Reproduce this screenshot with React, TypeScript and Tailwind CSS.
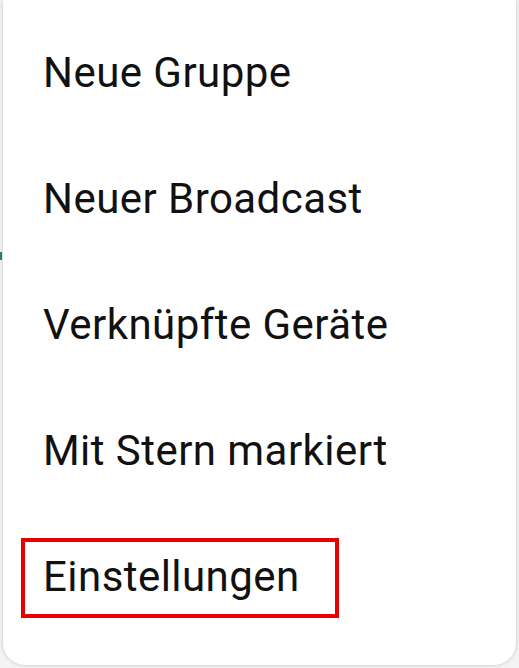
import React from 'react';

const items = ['Neue Gruppe', 'Neuer Broadcast', 'Verknüpfte Geräte', 'Mit Stern markiert', 'Einstellungen'];

const App: React.FC = () => {
  return (
    <div className="relative w-[519px] h-[668px] overflow-hidden bg-[#f4f4f4]">
      {/* underlying tab indicator peeking out */}
      <div className="absolute left-0 top-[252px] w-[2px] h-[8px] bg-[#1f8a6e]" />

      {/* menu panel */}
      <div
        className="relative mx-[3px] h-[665px] bg-white rounded-b-[22px] shadow-[0_0_4px_rgba(0,0,0,0.2)] pt-[9px]"
        style={{ fontFamily: 'Roboto, "Noto Sans", sans-serif' }}
      >
        {items.map((label, i) => (
          <div key={label} className="relative h-[126px] flex items-center pl-[40px]">
            <span className="text-[42px] leading-[49px] text-[#111111] tracking-[0.45px]">{label}</span>
            {i === items.length - 1 && (
              <div className="absolute left-[18px] top-[25px] w-[318px] h-[80px] border-[4px] border-[#e60000] pointer-events-none" />
            )}
          </div>
        ))}
      </div>
    </div>
  );
};

export default App;
